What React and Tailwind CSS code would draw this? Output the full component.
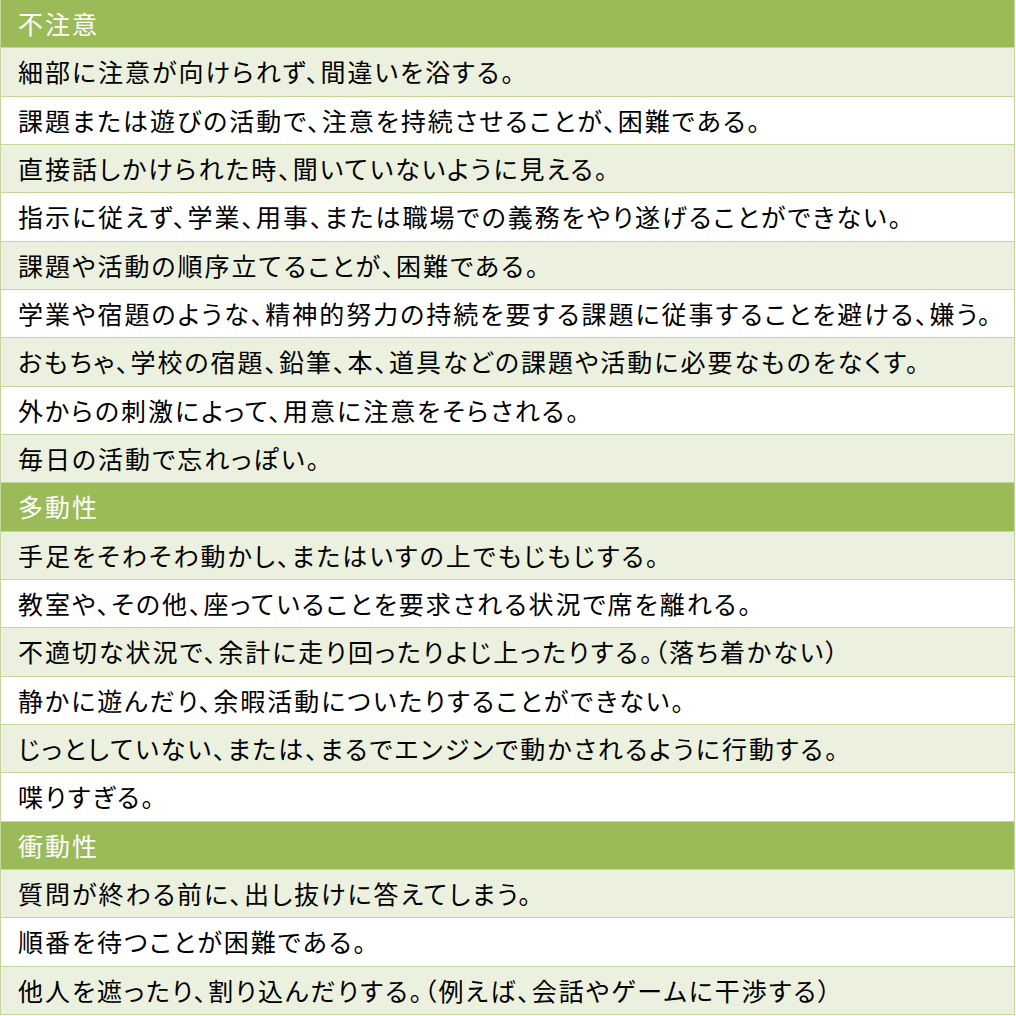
import React from "react";

const sections = [
  {
    title: "不注意",
    items: [
      "細部に注意が向けられず、間違いを浴する。",
      "課題または遊びの活動で、注意を持続させることが、困難である。",
      "直接話しかけられた時、聞いていないように見える。",
      "指示に従えず、学業、用事、または職場での義務をやり遂げることができない。",
      "課題や活動の順序立てることが、困難である。",
      "学業や宿題のような、精神的努力の持続を要する課題に従事することを避ける、嫌う。",
      "おもちゃ、学校の宿題、鉛筆、本、道具などの課題や活動に必要なものをなくす。",
      "外からの刺激によって、用意に注意をそらされる。",
      "毎日の活動で忘れっぽい。",
    ],
  },
  {
    title: "多動性",
    items: [
      "手足をそわそわ動かし、またはいすの上でもじもじする。",
      "教室や、その他、座っていることを要求される状況で席を離れる。",
      "不適切な状況で、余計に走り回ったりよじ上ったりする。（落ち着かない）",
      "静かに遊んだり、余暇活動についたりすることができない。",
      "じっとしていない、または、まるでエンジンで動かされるように行動する。",
      "喋りすぎる。",
    ],
  },
  {
    title: "衝動性",
    items: [
      "質問が終わる前に、出し抜けに答えてしまう。",
      "順番を待つことが困難である。",
      "他人を遮ったり、割り込んだりする。（例えば、会話やゲームに干渉する）",
    ],
  },
];

export default function App() {
  const rows = [];
  sections.forEach((s, si) => {
    rows.push(
      <div
        key={`h${si}`}
        className="flex-1 flex items-center pl-[17px] bg-[#9bbb59] text-white border-b border-[#c3d69b]"
      >
        <span>{s.title}</span>
      </div>
    );
    s.items.forEach((t, i) => {
      rows.push(
        <div
          key={`r${si}-${i}`}
          className={
            "flex-1 flex items-center pl-[17px] text-black border-b border-[#c3d69b] whitespace-nowrap " +
            (i % 2 === 0 ? "bg-[#ebf1de]" : "bg-white")
          }
        >
          <span>{t}</span>
        </div>
      );
    });
  });
  return (
    <div className="w-[1016px] h-[1016px] bg-white">
      <div
        className="w-[1015px] h-[1015px] flex flex-col border-l border-r border-[#c3d69b] text-[25px] tracking-[2px] leading-none [font-feature-settings:'palt']"
        style={{ fontFamily: '"Noto Sans CJK JP", "Noto Sans", sans-serif' }}
      >
        {rows}
      </div>
    </div>
  );
}
